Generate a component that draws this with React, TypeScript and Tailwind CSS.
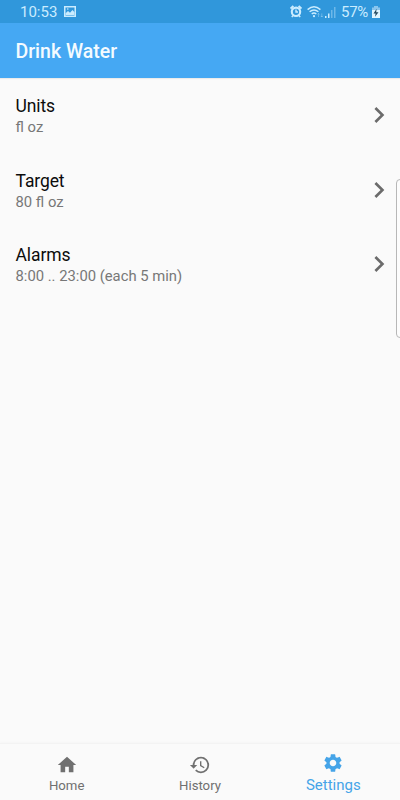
import { MdHome, MdHistory, MdSettings, MdChevronRight } from "react-icons/md";

const rows = [
  { title: "Units", detail: "fl oz" },
  { title: "Target", detail: "80 fl oz" },
  { title: "Alarms", detail: "8:00 .. 23:00 (each 5 min)" },
];

function PictureIcon() {
  return (
    <svg className="ml-[7px] h-[11px] w-3" viewBox="0 0 12 11" fill="none" stroke="currentColor">
      <rect x="0.75" y="0.75" width="10.5" height="9.5" strokeWidth="1.5" />
      <path d="M1.5 9V7.2L4 5l2 1.7L8.5 4l2 2.3V9z" fill="currentColor" stroke="none" />
      <circle cx="3.8" cy="3" r="0.8" fill="currentColor" stroke="none" />
    </svg>
  );
}

function AlarmIcon() {
  return (
    <svg className="h-[13px] w-3" viewBox="0 0 12 13" fill="none" stroke="currentColor">
      <circle cx="6" cy="6.8" r="4.2" strokeWidth="2.1" />
      <path d="M.5 3.6 3.4.9M11.5 3.6 8.6.9" strokeWidth="2" />
      <path d="M6 4.5V7h2M3 10.5l-1.2 1.6M9 10.5l1.2 1.6" strokeWidth="1.4" />
    </svg>
  );
}

function WifiIcon() {
  return (
    <svg className="ml-[5px] h-[13px] w-[17px]" viewBox="0 0 17 13" fill="none" stroke="currentColor">
      <path d="M.6 4.6q6.4-5.6 12.8 0M2.6 6.8q4.4-3.6 8.8 0M4.7 9q2.3-1.9 4.6 0" strokeWidth="1.4" />
      <circle cx="7" cy="11.2" r="1.1" fill="currentColor" stroke="none" />
      <path d="M11.5 12V8.4M10.4 9.5l1.1-1.1 1.1 1.1M14.8 8.4V12M13.7 10.9l1.1 1.1 1.1-1.1" strokeWidth=".8" opacity=".45" />
    </svg>
  );
}

function SignalIcon() {
  return (
    <svg className="ml-px h-3 w-[11px]" viewBox="0 0 11 12" fill="currentColor">
      <path d="M0 10h1.5v2H0zM3 7.5h1.5V12H3z" />
      <path d="M6 4h1.5v8H6zM9 1h1.5v11H9z" opacity=".4" />
    </svg>
  );
}

function BatteryIcon() {
  return (
    <svg className="ml-[3px] h-3 w-2" viewBox="0 0 8 12">
      <path d="M0 1.5h2V0h4v1.5h2V4H0z" fill="#8bc6ee" />
      <path d="M0 4h8v8H0z" fill="#e0f5ff" />
      <path d="M4.6 2.8 1.5 7.4h2.1L3 10.8l3.5-4.6H4.2z" fill="#24495f" />
    </svg>
  );
}

export default function App() {
  return (
    <div className="relative flex h-[800px] w-[400px] flex-col overflow-hidden bg-[#fafafa] font-[Roboto,sans-serif]">
      <div className="flex h-[23px] shrink-0 items-center bg-[#3097db] pr-[20px] pl-[20px] text-[#caecff]">
        <span className="w-[37px] pt-px text-[15px] leading-[22px] whitespace-nowrap">10:53</span>
        <PictureIcon />
        <div className="ml-auto flex items-center">
          <AlarmIcon />
          <WifiIcon />
          <SignalIcon />
          <span className="ml-[5px] w-[28px] pt-px text-[15px] leading-[22px] tracking-[-0.3px] whitespace-nowrap">57%</span>
          <BatteryIcon />
        </div>
      </div>
      <header className="flex h-[55px] shrink-0 items-center bg-[#45a8f3] pt-[2px] pl-[15.5px] shadow-[0_1px_1px_rgba(0,0,0,0.06)]">
        <h1 className="text-[19.5px] font-medium text-[#f4fbff]">Drink Water</h1>
      </header>
      <main className="flex flex-1 flex-col">
        {rows.map((row) => (
          <div key={row.title} className="flex h-[74.5px] items-center justify-between pr-[5px] pl-[15.5px]">
            <div className="pt-[2.5px]">
              <div className="text-[17.5px] leading-[22px] tracking-[-0.1px] text-[#0c0c0c]">{row.title}</div>
              <div className="text-[14.8px] leading-[21px] text-[#777]">{row.detail}</div>
            </div>
            <MdChevronRight className="size-8 text-[#6b6b6b]" />
          </div>
        ))}
      </main>
      <nav className="grid h-[57px] shrink-0 grid-cols-3 border-t border-[#f3f3f3] shadow-[0_-1px_2px_rgba(0,0,0,0.02)]">
        <div className="flex flex-col items-center pt-[10px] text-[#707070]">
          <MdHome className="size-[22px]" />
          <span className="text-[13.2px] leading-[20px]">Home</span>
        </div>
        <div className="flex flex-col items-center pt-[10px] text-[#707070]">
          <MdHistory className="size-[22px]" />
          <span className="text-[13.2px] leading-[20px]">History</span>
        </div>
        <div className="flex flex-col items-center pt-[8px] text-[#45a4e8]">
          <MdSettings className="size-[22px]" />
          <span className="text-[15px] leading-[23px]">Settings</span>
        </div>
      </nav>
      <div className="absolute top-[179px] -right-[6px] h-[159px] w-[10px] rounded-[4px] border border-[#b7b7b7] bg-[#fcfcfc]" />
    </div>
  );
}
